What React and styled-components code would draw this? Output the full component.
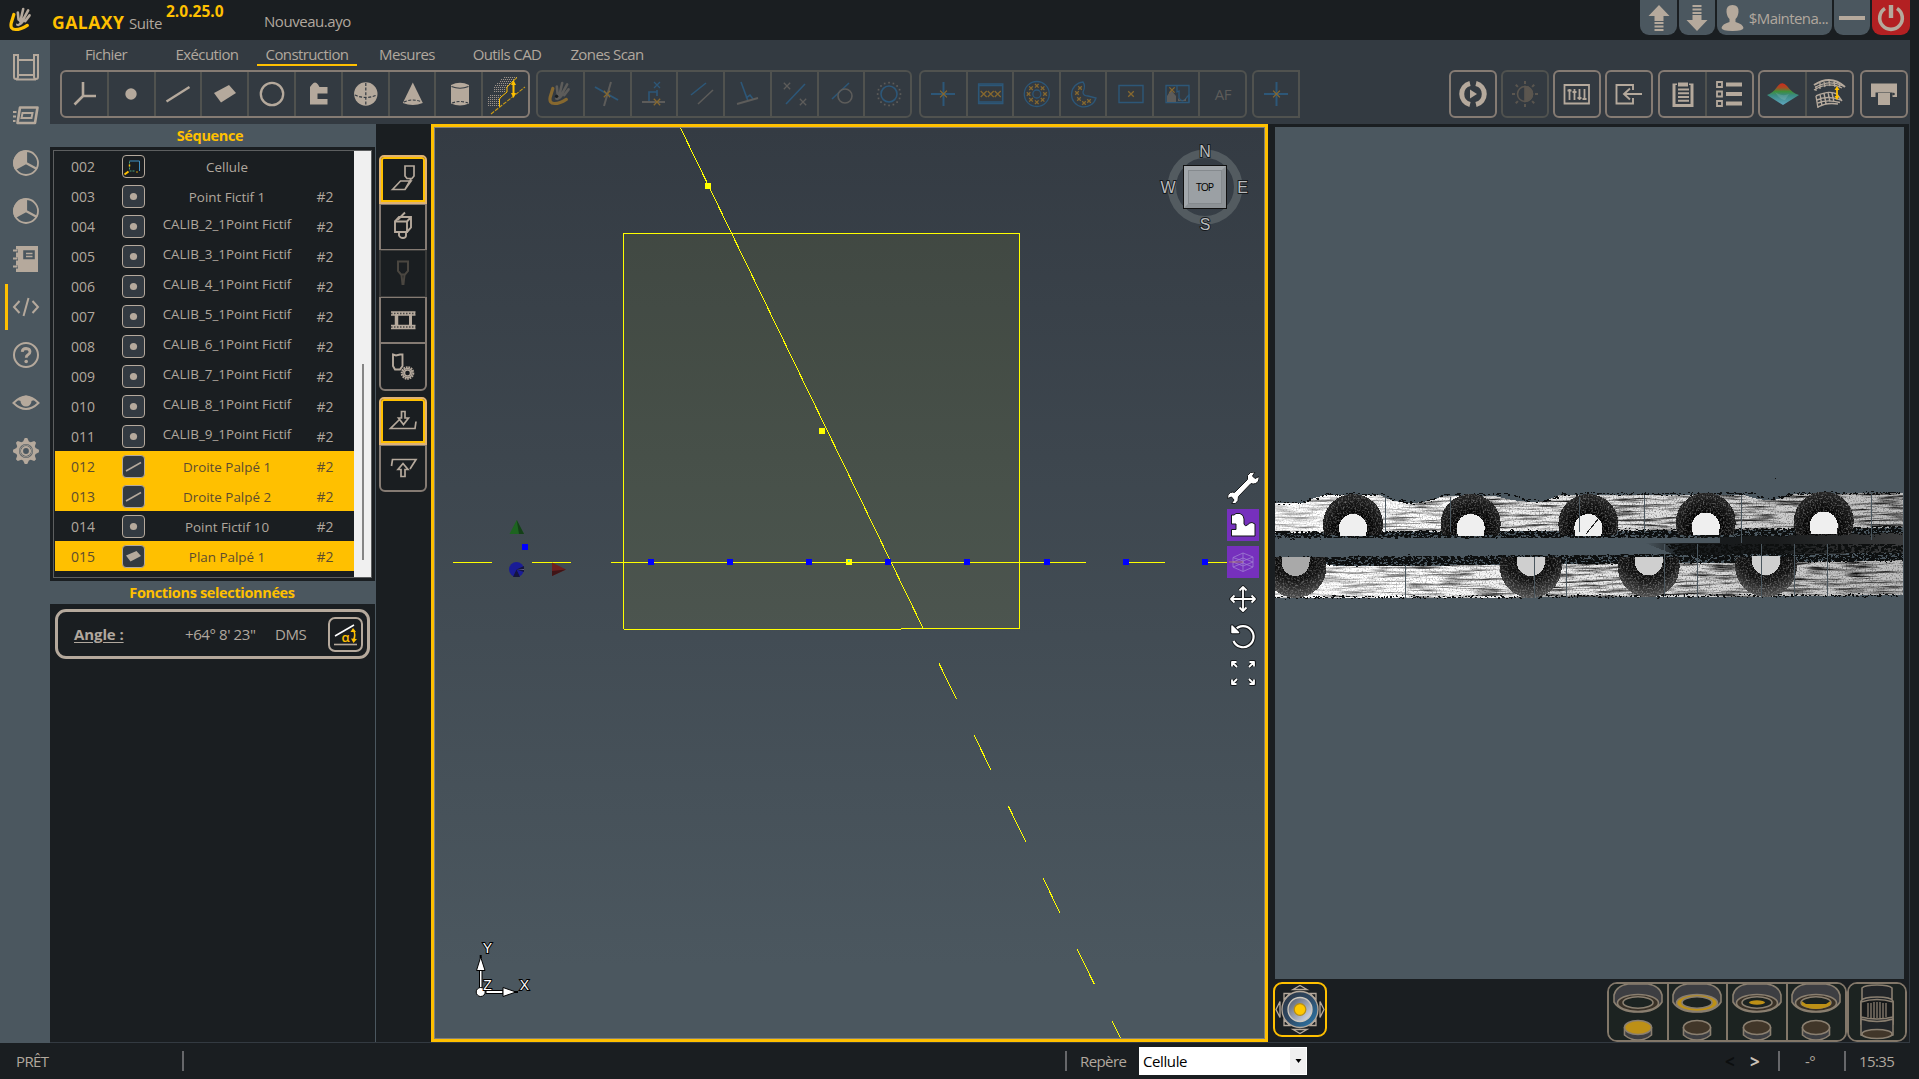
import React from "react";
import styled, { createGlobalStyle, css } from "styled-components";

const C = {
  dark: "#1a1e21",
  bar: "#333a41",
  slate: "#4b575f",
  gold: "#ffc000",
  sand: "#b5a99c",
  text: "#b1a89e",
  edge: "#857b73",
  faint: "#50524f",
  blue: "#2d5778",
  ochre: "#86682f",
  grey: "#5d5c5a",
};

const Global = createGlobalStyle`
  * { box-sizing: border-box; }
  body { margin: 0; background: ${C.dark}; overflow: hidden; }
  svg { display: block; flex: none; }
`;

const App_ = styled.div`
  width: 1919px;
  height: 1079px;
  display: flex;
  flex-direction: column;
  background: ${C.dark};
  color: ${C.text};
  font-family: "Open Sans", "Noto Sans", sans-serif;
  font-size: 15px;
  white-space: nowrap;
`;

/* ---------- title bar ---------- */
const TitleBar = styled.header`
  height: 40px;
  display: flex;
  align-items: flex-start;
  padding: 0 9px;
`;
const Logo = styled.div`
  width: 43px;
  padding-top: 7px;
`;
const Word = styled.span`
  width: ${(p) => p.$w}px;
  margin-top: ${(p) => p.$top}px;
  line-height: 20px;
  font-size: ${(p) => p.$size}px;
  font-weight: ${(p) => (p.$bold ? 700 : 400)};
  color: ${(p) => (p.$bold ? C.gold : C.text)};
  letter-spacing: ${(p) => p.$ls || 0}px;
`;
const Session = styled.div`
  margin-left: auto;
  display: flex;
  gap: 2px;
`;
const Tab = styled.button`
  width: ${(p) => p.$w}px;
  height: 35px;
  padding: 0;
  border: 0;
  border-radius: 0 0 9px 9px;
  background: ${(p) => (p.$danger ? "#b32022" : C.slate)};
  color: ${C.text};
  font: 15px "Open Sans", sans-serif;
  letter-spacing: -0.6px;
  display: flex;
  align-items: center;
  justify-content: center;
  gap: 5px;
`;

/* ---------- frame ---------- */
const Body = styled.div`
  height: 1003px;
  display: flex;
`;
const Rail = styled.nav`
  width: 50px;
  background: ${C.slate};
  padding: 3px 0 0 2px;
  display: flex;
  flex-direction: column;
`;
const RailItem = styled.div`
  height: 48px;
  display: flex;
  align-items: center;
  justify-content: center;
  position: relative;
  ${(p) =>
    p.$active &&
    css`
      &::before {
        content: "";
        position: absolute;
        left: 3px;
        top: 1px;
        width: 3px;
        height: 46px;
        background: ${C.gold};
      }
    `}
`;
const Main = styled.div`
  width: 1860px;
  display: flex;
  flex-direction: column;
  border-bottom: 1px solid ${C.bar};
`;
const Ribbon = styled.div`
  height: 84px;
  background: ${C.bar};
  display: flex;
  flex-direction: column;
`;
const Menu = styled.div`
  height: 30px;
  display: flex;
  padding-left: 6px;
`;
const MenuItem = styled.div`
  width: 100px;
  height: 26px;
  margin-right: ${(p) => (p.$gap ? p.$gap - 1 : 0)}px;
  line-height: 28px;
  text-align: center;
  font-size: 15px;
  letter-spacing: -0.6px;
  border-bottom: 2px solid ${(p) => (p.$active ? C.gold : "transparent")};
`;
const Tools = styled.div`
  display: flex;
  padding: 0 1px 0 10px;
`;
const Group = styled.div`
  width: ${(p) => p.$w}px;
  height: 48px;
  flex: none;
  margin-left: ${(p) => (p.$gap ? p.$gap : 0)}px;
  display: flex;
  border: 2px solid ${(p) => (p.$off ? C.faint : C.edge)};
  border-radius: ${(p) => (p.$open ? "6px 0 0 6px" : "6px")};
`;
const Tool = styled.button`
  flex: 1 1 0;
  min-width: 0;
  padding: 0;
  border: 0;
  background: none;
  display: flex;
  align-items: center;
  justify-content: center;
  & + & {
    border-left: 2px solid ${(p) => (p.$off ? C.faint : C.edge)};
  }
`;
const AF = styled.span`
  font: 15px "Open Sans", sans-serif;
  color: ${C.grey};
  letter-spacing: -0.5px;
`;
const Work = styled.div`
  height: 918px;
  display: flex;
`;

/* ---------- sequence panel ---------- */
const Side = styled.aside`
  width: 326px;
  border-right: 1px solid ${C.slate};
  display: flex;
  flex-direction: column;
`;
const Heading = styled.h2`
  margin: 0;
  height: 23px;
  line-height: 23px;
  padding-right: ${(p) => p.$shift || 4}px;
  text-align: center;
  background: ${C.slate};
  color: ${C.gold};
  font-size: 14.5px;
  font-weight: 700;
  letter-spacing: -0.35px;
`;
const ListBox = styled.div`
  margin: 3px 3px 3px;
  width: 319px;
  height: 428px;
  border: 1px solid #5d5f60;
  display: flex;
`;
const Rows = styled.div`
  width: 300px;
  padding-left: 1px;
`;
const Row = styled.div`
  height: 30px;
  display: grid;
  grid-template-columns: 56px 45px 142px 54px;
  align-items: center;
  justify-items: center;
  font-size: 14px;
  background: ${(p) => (p.$on ? C.gold : "transparent")};
  color: ${(p) => (p.$on ? "#5d4c2e" : C.text)};
`;
const Name = styled.span`
  font-size: 13.4px;
  line-height: 18px;
  padding-top: ${(p) => (p.$raised ? 0 : 1)}px;
  padding-bottom: ${(p) => (p.$raised ? 4 : 0)}px;
`;
const Badge = styled.span`
  width: 23px;
  height: 23px;
  display: flex;
  align-items: center;
  justify-content: center;
  border: 1px solid ${C.sand};
  border-radius: 4px;
  background: ${(p) => (p.$plain ? C.dark : C.bar)};
  overflow: hidden;
`;
const Scroll = styled.div`
  flex: 1;
  background: #f0f0f0;
  padding: 213px 0 0 8px;
`;
const Thumb = styled.div`
  width: 2px;
  height: 196px;
  background: #858585;
`;
const Result = styled.div`
  margin: 5px 4px 0 5px;
  width: 315px;
  height: 50px;
  border: 3px solid ${C.sand};
  border-radius: 11px;
  display: flex;
  align-items: center;
  padding: 0 4px 0 16px;
`;
const ResultText = styled.span`
  width: ${(p) => p.$w}px;
  font-size: 15px;
  letter-spacing: ${(p) => (p.$bold ? -0.1 : -0.4)}px;
  font-weight: ${(p) => (p.$bold ? 700 : 400)};
  text-decoration: ${(p) => (p.$bold ? "underline" : "none")};
  text-underline-offset: 2px;
`;
const AngleButton = styled.div`
  width: 35px;
  height: 35px;
  border: 2px solid ${C.sand};
  border-radius: 7px;
  display: flex;
  align-items: center;
  justify-content: center;
`;

/* ---------- probe strip ---------- */
const Strip = styled.div`
  width: 55px;
  padding: 31px 4px 0 3px;
  display: flex;
  flex-direction: column;
  gap: 6px;
`;
const StripGroup = styled.div`
  width: 48px;
  height: ${(p) => p.$h}px;
  display: flex;
  flex-direction: column;
`;
const Probe = styled.div`
  flex: 1;
  display: flex;
  align-items: center;
  justify-content: center;
  border: 2px solid ${(p) => (p.$off ? "#3b3b3a" : C.edge)};
  border-bottom-width: ${(p) => (p.$last ? 2 : 1)}px;
  border-top-width: 1px;
  border-radius: ${(p) => (p.$last ? "0 0 6px 6px" : "0")};
  ${(p) =>
    p.$on &&
    css`
      border: 2px solid #dfb274;
      border-radius: 5px 5px 0 0;
      box-shadow: inset 0 0 0 2px ${C.gold};
    `}
`;

/* ---------- 3D view ---------- */
const View = styled.section`
  width: 837px;
  height: 918px;
  position: relative;
  border: 3px solid ${C.gold};
`;
const Scene = styled.div`
  width: 831px;
  height: 912px;
  border: 1px solid #83807a;
  background: linear-gradient(#343b43, #4b575f 92%);
`;
const Floating = styled.div`
  position: absolute;
  left: 793px;
  top: 345px;
  display: flex;
  flex-direction: column;
  gap: 5px;
`;
const Float = styled.div`
  width: 32px;
  height: 32px;
  background: ${(p) => (p.$purple ? "#7630bd" : "transparent")};
  display: flex;
  align-items: center;
  justify-content: center;
`;

/* ---------- camera side ---------- */
const Camera = styled.section`
  width: 642px;
  padding: 3px 0 0 7px;
  border-right: 1px solid ${C.bar};
  display: flex;
  flex-direction: column;
`;
const Scan = styled.div`
  width: 629px;
  height: 852px;
  padding-top: 333px;
  background: ${C.slate};
`;
const Lights = styled.div`
  display: flex;
  margin: 3px 0 0 -2px;
`;
const Stick = styled.div`
  width: 54px;
  height: 55px;
  border: 2px solid ${C.gold};
  border-radius: 9px;
  display: flex;
  align-items: center;
  justify-content: center;
`;
const LightGroup = styled.div`
  width: ${(p) => p.$w}px;
  height: 60px;
  flex: none;
  margin-left: ${(p) => p.$gap}px;
  display: flex;
  border: 2px solid #827769;
  border-radius: 10px;
  overflow: hidden;
`;
const Light = styled.div`
  flex: 1 1 0;
  min-width: 0;
  background: #1c2321;
  display: flex;
  justify-content: center;
  & + & {
    border-left: 2px solid #827769;
  }
`;

/* ---------- status ---------- */
const Status = styled.footer`
  height: 36px;
  display: flex;
  align-items: center;
  font-size: 15px;
  letter-spacing: -0.6px;
`;
const Cell = styled.span`
  width: ${(p) => p.$w}px;
  padding-left: ${(p) => p.$pad || 0}px;
  color: ${(p) => p.$color || C.text};
  font-size: ${(p) => (p.$bold ? 17 : 15)}px;
  font-weight: ${(p) => (p.$bold ? 700 : 400)};
`;
const Sep = styled.span`
  width: 2px;
  height: 20px;
  background: #66676a;
`;
const Select = styled.div`
  width: 168px;
  height: 28px;
  background: #fff;
  border: 1px solid #fff;
  color: #000;
  letter-spacing: -0.4px;
  display: flex;
  align-items: center;
  justify-content: space-between;
  padding-left: 3px;
`;
const Drop = styled.span`
  width: 16px;
  height: 26px;
  background: #f0f0f0;
  display: flex;
  align-items: center;
  justify-content: center;
`;

/* Icon canvas whose origin is its centre */
const Ic = ({ s = 44, h, c = C.sand, sw = 1.6, children }) => (
  <svg
    width={s}
    height={h || s}
    viewBox={`${-s / 2} ${-(h || s) / 2} ${s} ${h || s}`}
    fill="none"
    stroke={c}
    strokeWidth={sw}
  >
    {children}
  </svg>
);

const Hand = ({ a = C.sand, b = C.gold, s = 24 }) => (
  <svg width={s} height={s * 1.08} viewBox="0 0 24 26" fill="none" strokeLinecap="round">
    <path d="M4.8 7.5 2.2 16Q0.8 22.6 6.5 22.6 12 22.6 18.3 18.4" stroke={b} strokeWidth="3.2" />
    <path d="M9.5 12.5 8.8 5.5M12 11.5 14.2 2M14.4 12.2 19.2 3.4M16.2 14.2 20.6 8.4" stroke={a} strokeWidth="2.6" />
    <path d="M7.5 15.5 10 12.2Q13 10 16.4 13.4L13 17.4Q9.5 20.4 7 18.4Z" fill={a} />
    <circle cx="8.6" cy="15.4" r="1.7" fill={C.dark} />
  </svg>
);

const x = (cx, cy, r = 2.4, c = C.ochre, k = "") => (
  <path key={k || `${cx},${cy}`} d={`M${cx - r} ${cy - r}l${2 * r} ${2 * r}m0 ${-2 * r}l${-2 * r} ${2 * r}`} stroke={c} strokeWidth="1.3" />
);
const ring = (n, r, fn, from = 0, to = 360) =>
  Array.from({ length: n }, (_, i) => {
    const t = ((from + ((to - from) * i) / n) * Math.PI) / 180;
    return fn(+(Math.cos(t) * r).toFixed(2), +(Math.sin(t) * r).toFixed(2), i);
  });

const hatch = (rows) =>
  rows.map(([y, a, b]) => <path key={y} d={`M${a} ${y}H${b}`} stroke={C.sand} strokeWidth="1.2" strokeDasharray="1.1 .9" opacity=".8" />);

const createTools = [
  <Ic key="a" sw={2.6}><path d="M-1-12V2H12M-1 2-9.5 10.5" /></Ic>,
  <Ic key="b"><circle r="5.7" fill={C.sand} stroke="none" /></Ic>,
  <Ic key="c" sw={2.4}><path d="M-11.5 7.5 11.5-7" /></Ic>,
  <Ic key="d"><path d="M-11-1 4-9 11-1-4 8.5Z" fill={C.sand} stroke="none" /></Ic>,
  <Ic key="e" sw={2.3}><circle r="11.2" /></Ic>,
  <Ic key="f"><path d="M-8-7-6-9.5Q-3-13.500 0-9.5L1.5-7H9.5V-.5H-.5V5H9.5V10.5H-8Z" fill={C.sand} stroke="none" /></Ic>,
  <Ic key="g"><g transform="translate(.8 0)"><circle r="11.7" fill={C.sand} stroke="none" /><path d="M0-11V11M-11 1Q0 6 11 1" stroke={C.bar} strokeDasharray="3 1.6" strokeWidth="1.2" /></g></Ic>,
  <Ic key="h"><g transform="translate(.8 0)"><path d="M0-11.5-10 9Q0 13 10 9Z" fill={C.sand} stroke="none" /><path d="M-9 8Q0 4 9 8" stroke={C.bar} strokeDasharray="3 1.6" strokeWidth="1.1" /></g></Ic>,
  <Ic key="i"><g transform="translate(1 0)"><path d="M-9-9Q0-13.5 9-9V9.5Q0 13.5-9 9.5Z" fill={C.sand} stroke="none" /><path d="M-8.500-7.500Q0-4 8.500-7.500" stroke={C.bar} strokeWidth="1.2" /><path d="M-8 9Q0 6 8 9" stroke={C.bar} strokeDasharray="3 1.6" strokeWidth="1.1" /></g></Ic>,
  <Ic key="j">
    <g transform="translate(1 0)">
      {hatch([[-16.500, -3, 10], [-14.500, -6, 8], [-12.500, -7, 6], [-10.500, -10, 4], [-8.500, -12, 2], [-6.500, -13, 0], [-4.500, -13, -1], [-2.500, -13, -1], [1.500, -17, -6], [3.500, -19, -7], [5.500, -19, -8], [7.500, -19, -8], [9.500, -19, -8], [11.500, -19, -8]])}
      <path d="M10-16.500 0-7V-2L-6 3-7.500 5V13" stroke={C.gold} strokeWidth="1" />
      <path d="M-16 20 18-7" stroke="#c99a14" strokeDasharray="4 1.200" strokeWidth="1.100" />
      <path d="M6.500-10V0" stroke={C.gold} strokeWidth="2" />
      <path d="M4-9 6.500-14 9-9ZM4-1 6.500 4 9-1Z" fill={C.gold} stroke="none" />
    </g>
  </Ic>,
];

const buildTools = [
  <Hand key="a" a={C.grey} b={C.ochre} s={24} />,
  <Ic key="b" c={C.blue} sw={2}><path d="M-12-7 11 6" /><path d="M4-12-3 12" stroke={C.grey} />{x(0, 0, 3.2)}</Ic>,
  <Ic key="c" c={C.blue}>{x(3, -9, 3, C.blue)}<path d="M3-4V2M-5 7V-2H3" /><path d="M-12 8H11" stroke={C.grey} strokeWidth="2" />{x(3, 8, 3.2)}</Ic>,
  <Ic key="d" c={C.blue}><path d="M-10 1 5-11" /><path d="M-3 10 12-4" stroke={C.grey} /></Ic>,
  <Ic key="e" c={C.blue}><path d="M-6-12 1 7M-1 4 3 1 6 5" /><path d="M-10 10 11 4" stroke={C.grey} strokeWidth="2" /></Ic>,
  <Ic key="f" c={C.blue}><path d="M-8 10 11-10" />{x(-7, -8, 3.2, C.grey)}{x(9, 8, 3.2, C.grey)}</Ic>,
  <Ic key="g" c={C.blue}><path d="M-9 5 8-11" /><circle cx="4" cy="2" r="7" stroke={C.grey} /></Ic>,
  <Ic key="h" c={C.blue}><g transform="translate(1 0)"><circle r="8" />{ring(16, 11.4, (a, b, i) => <rect key={i} x={a - 0.8} y={b - 0.8} width="1.7" height="1.7" fill={C.grey} stroke="none" />)}</g></Ic>,
];

const detectTools = [
  <Ic key="a" c={C.blue} sw={2}><path d="M.500-12V12M-12 0H12" />{x(0.5, 0, 3.4)}</Ic>,
  <Ic key="b" c={C.blue}><g transform="translate(.7 0)"><path d="M-12-10H12V9.500H-12Z" /><path d="M-12-8.500H12M-12 8H12" />{x(-7, 0, 3)}{x(0, 0, 3)}{x(7, 0, 3)}</g></Ic>,
  <Ic key="c" c={C.blue} sw={1.3}><g transform="translate(.8 0)"><circle r="12.500" /><circle r="4" />{ring(8, 8.2, (a, b, i) => x(a, b, 1.8, C.ochre, "r" + i))}</g></Ic>,
  <Ic key="d" c={C.blue} sw={1.3}><g transform="translate(1 0)"><path d="M-1-12A12.500 12.500 0 1 0 12 4L4 2Q-1 2-1-2 2-8-1-12Z" />{[[-4, -6], [-7, -1], [-5, 5], [0, 9], [5, 7]].map(([a, b]) => x(a, b, 1.8))}</g></Ic>,
  <Ic key="e" c={C.blue} sw={1.4}><g transform="translate(1 0)"><path d="M-12-8.500H12V8.500H-12Z" />{x(0, 0, 2.8)}</g></Ic>,
  <Ic key="f" c={C.blue} sw={1.3}><g transform="translate(1 0)"><path d="M-11-8.500H12V8.500H-11Z" /><path d="M-10 8V2L-6-4-1 2V8Z" fill={C.grey} stroke="none" /><path d="M0-8V-2L2-3V4Q6 10 10 3L12 1V8.500" /><path d="M1 7V4Q5 10 9 4V7Z" fill={C.grey} stroke="none" />{x(-5, -4, 2.6)}</g></Ic>,
  <AF key="g">AF</AF>,
];

const Print = (
  <Ic><path d="M-13-10.500H13V3H8.500V-1.500H-8.500V3H-13Z" fill={C.sand} stroke="none" /><path d="M-6-1H6V11H-6Z" fill={C.sand} stroke="none" /><circle cx="9.500" cy="0" r="1.300" fill={C.bar} stroke="none" /></Ic>
);
const rightGroups = [
  { w: 48, gap: 149, items: [<Ic key="a" sw={5}><path d="M-3-10.500A10.800 10.800 0 0 0-3 10.500M3-10.500A10.800 10.800 0 0 1 3 10.500" /><path d="M-3-4.500 4 0-3 4.500Z" fill={C.sand} stroke="none" /></Ic>] },
  { w: 48, gap: 4, off: true, items: [<Ic key="a" c="#5b564f"><circle r="7.500" /><path d="M0-7.500A7.500 7.500 0 0 1 0 7.500Z" fill="#5b564f" />{ring(8, 1, (a, b, i) => <path key={i} d={`M${a * 10} ${b * 10}L${a * 13} ${b * 13}`} strokeWidth="2" />)}</Ic>] },
  { w: 48, gap: 4, items: [<Ic key="a" sw={1.8}><path d="M-12.500-9H12V9.500H-12.500Z" /><path d="M-7.500-5V6M-2.500-5V6M2.500-5V6M7.500-5V6" strokeWidth="1.8" /><path d="M-9.500-3.500H-5.500M-4.500-2H-.5M.5 4H4.500M5.500 5H9.500" strokeWidth="2" /></Ic>] },
  { w: 48, gap: 4, items: [<Ic key="a" sw={1.9}><path d="M4-4V-9H-12.500V9.500H4V4M13 0H-5M1-5.500-5 0 1 5.500" /></Ic>] },
  { w: 96, gap: 5, items: [
    <Ic key="a"><path d="M-10.500-10.500H10.500V13H-10.500Z" fill={C.sand} stroke="none" /><path d="M-7.500-9H7.500V10H-7.500Z" fill={C.bar} stroke="none" /><path d="M-5.500-12H5.500V-7H-5.500Z" fill={C.sand} stroke={C.bar} strokeWidth="1" /><path d="M-5-4.500H6M-5-.8H6M-5 3H6M-5 6.700H6" strokeWidth="2" /></Ic>,
    <Ic key="b" sw={1.8}><path d="M-13-12H-8V-7H-13ZM-13-2.500H-8V2.500H-13ZM-13 7H-8V12H-13Z" /><path d="M-4-9.500H12M-4 0H12M-4 9.500H12" strokeWidth="4" /></Ic>,
  ] },
  { w: 96, gap: 4, items: [
    <Ic key="a"><defs><linearGradient id="peak" x2="0" y2="1"><stop offset="0" stopColor="#d02a1c" /><stop offset=".2" stopColor="#a84a22" /><stop offset=".38" stopColor="#3f8f3c" /><stop offset=".55" stopColor="#3a8a80" /><stop offset="1" stopColor="#5fa6c0" /></linearGradient></defs><path d="M-16 1Q-10-1-6-7-1-14 4-8 9-1 16 1L0 11Z" fill="url(#peak)" stroke="none" /><path d="M-8-2Q-1 3 6 0L2 6Q-3 6-8-2Z" fill="#fff" opacity=".12" stroke="none" /></Ic>,
    <Ic key="b"><g transform="translate(-1 0)"><path d="M-15-9Q2-20 16-7" strokeWidth="2" /><path d="M-15-4Q0-13 13-6M-13-8V-3M-9-11-9-5M-5-12-4-7M0-13 1-8M5-12 6-7M10-10 11-6M-14-6.500Q0-15 14-8" strokeWidth="1.3" /><path d="M-13 2Q0-4 8 0L13 7M-12 6Q-2 1 12 6M-11 9Q-2 5 11 8.500M-11 13Q-2 8 9 10M-13 2-11 14M-9 0-7 12M-5-1-3 10M-1-2 1 8M3-1 5 8" strokeWidth="1.4" /><path d="M8-6V4" stroke={C.gold} strokeWidth="1.800" /><path d="M5.500-4 8-8 10.500-4ZM5.500 2 8 6 10.500 2Z" fill={C.gold} stroke="none" /></g></Ic>,
  ] },
  { w: 48, gap: 6, items: [React.cloneElement(Print, { key: "p" })] },
];

const gear = (R, r, n) =>
  "M" + Array.from({ length: n * 4 }, (_, i) => {
    const t = ((i - 0.5) / (n * 4)) * Math.PI * 2;
    const q = i % 4 < 2 ? R : r;
    return `${(Math.cos(t) * q).toFixed(2)} ${(Math.sin(t) * q).toFixed(2)}`;
  }).join("L") + "Z";

const Pie = (
  <Ic s={32} sw={1.8}><circle r="12" /><path d="M0-.5V-12.500A12.500 12.500 0 0 0-11 6.500Z" fill={C.sand} stroke="none" /><path d="M0-12V0L11 6M0 0-11 6" strokeWidth="2.200" /></Ic>
);
const railIcons = [
  <Ic s={32} sw={2}><path d="M-8-7H8M-8 8H8M-12-12H-8V10Q-8 12-10 12-12 12-12 10ZM12-12H8V10Q8 12 10 12 12 12 12 10Z" /><path d="M-10 12.500H10" /></Ic>,
  <Ic s={32} sw={2.6}><path d="M-6-7.500H11.500L9 8H-8.500Z" strokeLinejoin="round" /><path d="M-3.500-2H6.500L5.500 3H-4.500Z" strokeWidth="2" /><path d="M-13-3H-9.500M-13 1.500H-10M-13 6H-10.500" strokeWidth="1.8" /></Ic>,
  Pie,
  Pie,
  <Ic s={32}><path d="M-10-13H12V13H-10Z" fill={C.sand} stroke="none" /><path d="M-2-8H8V-.5H-2Z" fill={C.slate} stroke={C.slate} /><path d="M0-5.500H6.500M0-2.500H6.500" strokeWidth="1.500" /><path d="M-13.500-8H-8M-13.500 0H-8M-13.500 8H-8" strokeWidth="3" stroke={C.slate} /><path d="M-13-8.500H-8.500M-13-.5H-8.500M-13 7.500H-8.500" strokeWidth="1.800" /></Ic>,
  <Ic s={32} sw={2}><path d="M-6.500-6-12 0-6.500 6M6.500-6 12 0 6.500 6M2.500-9-2.500 9" /></Ic>,
  <Ic s={32} sw={2}><circle r="12" /><path d="M-3.800-3.200Q-3.500-6.500 0-6.500 4-6.300 4-3.200 4-1.300 2-.2 .2.8 .2 2.800" strokeWidth="2.800" /><circle cx=".2" cy="6.500" r="1.800" fill={C.sand} stroke="none" /></Ic>,
  <Ic s={32} sw={2}><path d="M-12.500 0Q0-13 12.500 0 0 12-12.500 0Z" /><circle cy="-2" r="5.500" fill={C.sand} stroke="none" /><path d="M-9-3Q0-10 9-3L5-2H-5Z" fill={C.sand} stroke="none" /></Ic>,
  <Ic s={32}><path d={gear(13, 10, 8)} fill={C.sand} stroke="none" /><circle r="7" fill={C.slate} stroke="none" /><circle r="4" strokeWidth="2.200" /><circle r="6" strokeWidth=".8" /></Ic>,
];

const rows = [
  ["002", "cell", "Cellule", ""],
  ["003", "dot", "Point Fictif 1", "#2"],
  ...[2, 3, 4, 5, 6, 7, 8, 9].map((n) => [String(n + 2).padStart(3, "0"), "dot", `CALIB_${n}_1Point Fictif`, "#2"]),
  ["012", "line", "Droite Palpé 1", "#2"],
  ["013", "line", "Droite Palpé 2", "#2"],
  ["014", "dot", "Point Fictif 10", "#2"],
  ["015", "plane", "Plan Palpé 1", "#2"],
];
const badgeIcons = {
  cell: <Ic s={21} sw={1}><path d="M-4-5.500H6V4.500" stroke="#3e8fc4" /><path d="M-4-5V3M-4 4.500H1" stroke="#4aa07c" strokeDasharray="2 1" /><path d="M-9 8-5 5" stroke={C.gold} strokeWidth="2" /><path d="M-4-2V0M3 5.500H4" stroke={C.gold} strokeWidth="1.500" /></Ic>,
  dot: <Ic s={21}><circle r="3.600" fill={C.sand} stroke="none" /></Ic>,
  line: <Ic s={21} sw={1.5}><path d="M-7.500 4.500 7.500-4" /></Ic>,
  plane: <Ic s={21}><path d="M-7.500-1 3-5.500 7.500-.5-3 5Z" fill={C.sand} stroke="none" /></Ic>,
};

const probesA = [
  { on: true, i: <Ic sw={1.7}><g transform="translate(0 1.500)"><path d="M2-14.500H11V-4.500L9-2H4L2-4.500ZM-10.500 9-2.500 .5H8L2 9ZM8-1.500 2 9" /></g></Ic> },
  { i: <Ic sw={1.9}><g transform="translate(0 -1.500)"><path d="M-8-4H4V6.500H-8ZM-8-4-4-8.500H8V2L4 6.500M4-4 8-8.500M-5-6 2-13M-4 7.500V10Q-3 12.500 0 12.500 3 12.500 3 10V7.500" /></g></Ic> },
  { off: true, i: <Ic c="#4a4640" sw={2}><path d="M-5-11.500H5V-2L2 1.500H-2L-5-2ZM-1.500 2-.5 11H.5L1.500 2" /></Ic> },
  { i: <Ic><path d="M-12-6.500H12.500M-12 7H12.500" strokeWidth="4.500" /><path d="M-12-6.500H12.500M-12 7H12.500" strokeWidth="1.500" stroke={C.dark} strokeDasharray="1.500 1.500" opacity=".7" /><path d="M-6.500-6V6" strokeWidth="3.500" /><path d="M7.500-6V6" strokeWidth="3" /></Ic> },
  { last: true, i: <Ic sw={1.9}><path d="M-10-12.500-7-11.500-3-12.500H-.500V-1L-3 2.500H-8L-10-1Z" /><g transform="translate(4.500 6)"><circle r="5.800" strokeWidth="2" strokeDasharray="1.700 .8" /><circle r="3" strokeWidth="1.400" /><circle r="4.500" strokeWidth="1.400" /></g></Ic> },
];
const probesB = [
  { on: true, i: <Ic sw={1.7}><path d="M-1.500-9.500H2V-3H5.500L.5 3.500-4.500-3H-1.500ZM-4-1-12.500 7.500H12L13 .5" /></Ic> },
  { last: true, i: <Ic sw={1.7}><path d="M-11.500-2-10.500-8.500H13L7 1M-2 8.500H2V1.500H5L0-4.500-5 1.500H-2Z" /></Ic> },
];

/* Drawing of the measured part: plane, probed lines and points */
const squares = [651, 730, 809, 888, 967, 1047, 1126, 1205];
const dashes = [[939, 663.500, 956.500, 699], [974, 735, 991, 770], [1008.500, 806.500, 1026, 842], [1043, 878, 1060, 913], [1077, 949, 1094.500, 984.500], [1112, 1021, 1120.500, 1038]];
const SceneDrawing = () => (
  <svg width="829" height="910" viewBox="435 128 829 910">
    <path d="M623.5 233.500H1019.500V628.500H901V629.500H623.500Z" fill="#ffff00" fillOpacity=".055" stroke="none" />
    <g stroke="#ffff00" fill="none" shapeRendering="crispEdges">
      <path d="M623.500 629V233.500H1019.500V628.500H901M901 629.500H623.500" />
      <path d="M453 562.500H492M532 562.500H571M611 562.500H1086M1125 562.500H1165M1205 562.500H1237" />
      <path d={`M680.5 128 923 628${dashes.map(([a, b, c, d]) => `M${a} ${b}L${c} ${d}`).join("")}`} />
    </g>
    <g fill="#0000ff">
      {squares.map((s) => <rect key={s} x={s - 3} y="559" width="6" height="6" />)}
      <rect x="522" y="544" width="6" height="6" />
    </g>
    <g fill="#ffff00">
      <rect x="846" y="559" width="6" height="6" /><rect x="705" y="183" width="6" height="6" /><rect x="819" y="428" width="6" height="6" />
      <rect x="848" y="560" width="1.500" height="2" fill="#22e0e0" />
    </g>
    <path d="M516.700 520 509.500 534H524Z" fill="#1d6420" /><path d="M516.700 520 519 534H524Z" fill="#143f18" />
    <circle cx="516.500" cy="569.500" r="7.500" fill="#1a1c96" /><path d="M516.500 569.500 513 577H520ZM516.500 569.500 524 566V572Z" fill="#15153f" /><path d="M516.500 569.500 524 569V570Z" fill="#66668c" />
    <path d="M552 562.500 566 569.500 552 576Z" fill="#6d2020" /><path d="M552 571 566 569.500 552 576Z" fill="#3f1517" />
    <g stroke="#000" fill="#fff">
      <path d="M479.500 988V970H482V988ZM486 990.500H503V993.500H486Z" /><path d="M480.700 957 476.500 970.500H485Z" /><path d="M503 987.500V996.500L516 992Z" /><circle cx="480.700" cy="992" r="4.500" />
    </g>
    <path d="M480.700 955v3M515 992h3" stroke="#000" strokeWidth="2" />
    <g fontFamily="Liberation Sans" fontSize="14" fill="#fff" stroke="#000" strokeWidth="2" paintOrder="stroke" textAnchor="middle">
      <text x="487.500" y="953">Y</text><text x="524.500" y="990">X</text><text x="487.500" y="989.500">Z</text>
    </g>
    <circle cx="1205" cy="187" r="33.200" fill="none" stroke="#535b60" strokeWidth="8.500" />
    <rect x="1183.500" y="165.500" width="43" height="43" fill="#9a9fa3" stroke="#111" />
    <path d="M1184 166H1226L1221 171H1189V203L1184 208Z" fill="#a3a8ac" /><path d="M1226 208H1184L1189 203H1221V171L1226 166Z" fill="#8d9296" />
    <rect x="1188.500" y="170.500" width="33" height="33" fill="#9ba0a4" stroke="#858a8e" />
    <text x="1205" y="191" fontFamily="Open Sans" fontSize="10.500" textAnchor="middle" textLength="18" fill="#000">TOP</text>
    <g fontFamily="Liberation Sans" fontSize="16" fill="#b9bcbf" stroke="#15181b" strokeWidth="1.800" paintOrder="stroke" textAnchor="middle">
      <text x="1205" y="156.500">N</text><text x="1242.500" y="193">E</text><text x="1168" y="193">W</text><text x="1205" y="230">S</text>
    </g>
  </svg>
);

const Outline = ({ d, w = 2.2, fill = "none" }) => (
  <g strokeLinejoin="round"><path d={d} stroke="#15181b" strokeWidth={w + 2} fill={fill} /><path d={d} stroke="#fff" strokeWidth={w} fill={fill} /></g>
);
const wrench = "M-8.500 4.500 4.500-8.500Q3-13 7.500-15.500L12-16 9.500-12 12-9.500 16-11.500Q16.500-6 12.500-4.500 10-3.500 8-4.500L-4.500 8.500Q-4 13-7.500 15.500L-11.500 15.500-9 12-11.500 9-15.500 10.500Q-16 6-12.500 4.500-10 3.700-8.500 4.500Z";
const floats = [
  { i: <Ic s={32}><path d={wrench} fill="#fff" stroke="#15181b" strokeWidth="1" /></Ic> },
  { p: true, i: <Ic s={32}><path d="M-11.500-10H-9L-7-11.500H-3Q1-10 1-6V-1Q2 2 4.500 0 6-2.500 9-2.500L12-1V11H-11.500V4.500H-7V-1H-11.500Z" fill="#fff" stroke="#15181b" strokeWidth="1" /></Ic> },
  { p: true, i: <Ic s={32} c="#a07fd2" sw={0.8}><path d="M-10-4.500 0-9 10-5V5L0 9.500-10 5ZM-10-4.500 0-1 10-5M0-1V9.500M0-9V1L-10 5M0 1 10 5M-10 0 0-4 10 0 0 4Z" /><path d="M-14 0H0" stroke="#b08a60" strokeWidth=".8" /></Ic> },
  { i: <Ic s={32}><Outline w={1.8} d="M0-11.500V11.500M-11.500 0H11.500M-3.500-8.500 0-12 3.500-8.500M-3.500 8.500 0 12 3.500 8.500M-8.500-3.500-12 0-8.500 3.500M8.500-3.500 12 0 8.500 3.500" /></Ic> },
  { i: <Ic s={32}><Outline d="M-8-6A10.500 10.500 0 1 1-9.500 5" /><Outline w={1.5} fill="#fff" d="M-11-10V-3.500H-4.500Z" /></Ic> },
  { i: <Ic s={32}><Outline w={1.8} d="M-6-6-10-10M-11-6.500V-11H-6.500M6-6 10-10M11-6.500V-11H6.500M-6 6-10 10M-11 6.500V11H-6.500M6 6 10 10M11 6.500V11H6.500" /></Ic> },
];

/* Stitched camera picture of the machined bar */
const upHoles = [[78, 64], [195.700, 64], [313.300, 64], [430.800, 62.500], [548.800, 61.500]];
const lowHoles = [[20.500, 107], [255.800, 107], [373.700, 106.500], [491, 106]];
const upPath = "M0 43Q15 44 28 43 42 36 52 35H105Q118 43 138 43 155 42 168 36L220 36Q240 42 262 42 276 40 284 35L470 35Q480 40 497 40 508 39 514 34L628 33V67L560 70 330 71 140 72 0 73Z";
const lowPath = "M0 101 50 104 60 106 120 106 228 105 345 103 450 103 628 100V135L500 136.500 250 137.500 0 138Z";
let seed = 7;
const rnd = () => ((seed = (seed * 16807) % 2147483647) / 2147483647);
const specks = (n, fy, spread, x0 = 0, x1 = 627) =>
  Array.from({ length: n }, () => {
    const px = Math.floor(x0 + rnd() * (x1 - x0));
    const py = Math.floor(fy(px) + (rnd() + rnd() - 1) * spread);
    return `M${px} ${py}h${1 + Math.floor(rnd() * 2)}v1h-2z`;
  }).join("");
const edgeTop = (px) => {
  for (const [c, half, depth] of [[12, 40, 8], [138, 32, 8], [262, 26, 7], [497, 20, 5]]) {
    const t = Math.abs(px - c) / half;
    if (t < 1) return 35 - px / 320 + depth * (1 - t * t);
  }
  return 35 - px / 320;
};
const edgeDots = specks(480, edgeTop, 2) + specks(460, (p) => 137.5 - p / 300, 2);
const gapDots = specks(1100, (p) => 75 - p / 200, 5) + specks(1400, (p) => 101 - p / 200, 5.5);
const ScanDrawing = () => (
  <svg width="629" height="160" viewBox="0 0 629 160" shapeRendering="crispEdges">
    <defs>
      <filter id="grain" x="0" y="0" width="1" height="1" colorInterpolationFilters="sRGB">
        <feTurbulence type="fractalNoise" baseFrequency=".03 .42" numOctaves="3" seed="4" />
        <feColorMatrix values="2.300 0 0 0 -.3  2.300 0 0 0 -.3  2.300 0 0 0 -.3  0 0 0 0 1" result="s" />
        <feTurbulence type="fractalNoise" baseFrequency=".7" numOctaves="1" seed="9" />
        <feColorMatrix values="1.300 0 0 0 .33  1.300 0 0 0 .33  1.300 0 0 0 .33  0 0 0 0 1" result="f" />
        <feBlend in="s" in2="f" mode="multiply" />
        <feComposite in2="SourceGraphic" operator="in" />
      </filter>
      <filter id="pits" x="0" y="0" width="1" height="1" colorInterpolationFilters="sRGB">
        <feTurbulence type="fractalNoise" baseFrequency=".6" numOctaves="2" seed="3" />
        <feColorMatrix values=".9 0 0 0 -.41  .9 0 0 0 -.41  .9 0 0 0 -.41  0 0 0 0 1" result="n" />
        <feBlend in="n" in2="SourceGraphic" mode="screen" />
        <feComposite in2="SourceGraphic" operator="in" />
      </filter>
      <filter id="speck" x="0" y="0" width="1" height="1" colorInterpolationFilters="sRGB">
        <feTurbulence type="fractalNoise" baseFrequency=".3 .45" numOctaves="2" seed="12" />
        <feColorMatrix values="0 0 0 0 .05  0 0 0 0 .06  0 0 0 0 .06  14 0 0 0 -6.200" />
        <feComposite in2="SourceGraphic" operator="in" />
      </filter>
      <linearGradient id="shade"><stop offset="0" stopColor="#fff" stopOpacity=".45" /><stop offset=".25" stopColor="#fff" stopOpacity=".15" /><stop offset=".5" stopColor="#000" stopOpacity=".08" /><stop offset="1" stopColor="#000" stopOpacity=".26" /></linearGradient>
      <linearGradient id="fade"><stop offset="0" stopColor="#0e1011" stopOpacity="0" /><stop offset=".15" stopColor="#0e1011" stopOpacity=".85" /><stop offset=".5" stopColor="#191b1c" /><stop offset="1" stopColor="#3a3b3c" /></linearGradient>
      <radialGradient id="boreUp" cx=".5" cy=".62" r=".62"><stop offset=".5" stopColor="#060606" /><stop offset=".8" stopColor="#191919" /><stop offset="1" stopColor="#262626" /></radialGradient>
      <radialGradient id="boreLow" cx=".5" cy=".2" r=".8"><stop offset=".3" stopColor="#050505" /><stop offset=".65" stopColor="#141414" /><stop offset="1" stopColor="#505050" /></radialGradient>
      <clipPath id="up"><path d="M0 0H629V75H0Z" /></clipPath>
      <clipPath id="low"><path d="M0 97H629V160H0Z" /></clipPath>
    </defs>
    <path d={upPath} filter="url(#grain)" /><path d={lowPath} filter="url(#grain)" />
    <path d={upPath} fill="url(#shade)" /><path d={lowPath} fill="url(#shade)" />
    <path d="M0 71.500 300 71 628 66V76L400 78 180 78 0 78Z" filter="url(#speck)" />
    <path d="M0 97 300 95 628 91V101L345 104 120 106 60 106 0 101Z" filter="url(#speck)" />
    <path d="M370 83H445V77L628 73V93L400 95Z" fill="url(#fade)" />
    <path d="M390 84H628V93L400 94Z" filter="url(#speck)" />
    <path d={edgeDots + gapDots} fill="#0d0f10" />
    <g clipPath="url(#up)"><g filter="url(#pits)">{upHoles.map(([a, b]) => <circle key={a} cx={a} cy={b} r="30" fill="url(#boreUp)" />)}</g></g>
    <g clipPath="url(#low)"><g filter="url(#pits)">{lowHoles.map(([a, b]) => <circle key={a} cx={a} cy={b} r="31" fill="url(#boreLow)" />)}</g></g>
    {upHoles.map(([a, b]) => <path key={a} d={`M${a - 13} ${b + 12}L${a - 14} ${b + 4}A14 14 0 0 1 ${a + 14} ${b + 4}L${a + 13} ${b + 12}Z`} fill="#efefef" />)}
    {lowHoles.map(([a, b]) => <path key={a} d={`M${a - 14} ${b - 10}V${b - 5}A14 14 0 0 0 ${a + 14} ${b - 5}V${b - 10}Z`} fill={a < 30 ? "#a9a9a9" : "#cfcfcf"} />)}
    <path d="M324 58 311 74" stroke="#222" />
    <path d="M110.500 37V72M175.500 37V72M304.500 37V72M369.500 35V73M466.500 35V83M596.500 33V80M130.500 105V138M259.500 97V138M291.500 100V137M389.500 84V136M422.500 84V137M486.500 84V138M519.500 84V137M552.500 84V136" stroke={C.slate} />
    <rect x="500" y="18" width="1" height="1" fill="#111" />
  </svg>
);

const RingLight = ({ lit }) => {
  const g = "#8a7f70";
  const y = "#bd9016";
  return (
    <svg width="56" height="58" viewBox="-28 0 56 58" fill="none" stroke={g} strokeWidth="1.600">
      <path d="M-24 15V11Q-22 2-10 0H10Q22 2 24 11V18Q18 28 0 28-18 28-24 18Z" fill="#3d3e42" />
      <ellipse cy="19" rx="20.500" ry="8.500" fill={lit === 1 ? y : "#393127"} />
      <ellipse cy="18.500" rx="15" ry="5.800" fill="#1c2321" />
      {lit === 2 && <ellipse cy="18.500" rx="8" ry="2.200" fill={y} stroke="none" />}
      {lit === 3 && <path d="M-14.500 17 -10 20H10L14.500 17V21Q8 25 0 25-8 25-14.500 21Z" fill={y} stroke="none" />}
      <path d="M-13.500 43V51Q-8 56 0 56 8 56 13.500 51V43" fill="#3d3e42" />
      <ellipse cy="43.500" rx="13.500" ry="7" fill={lit === 0 ? y : "#413629"} />
    </svg>
  );
};

export default function App() {
  return (
    <App_>
      <Global />
      <TitleBar>
        <Logo><Hand /></Logo>
        <Word $w={77} $top={12} $size={17.5} $bold $ls={0.5}>GALAXY</Word>
        <Word $w={37} $top={13} $size={15} $ls={-0.4}>Suite</Word>
        <Word $w={98} $top={1} $size={15.5} $bold $ls={0}>2.0.25.0</Word>
        <Word $w={100} $top={11} $size={15} $ls={-0.45}>Nouveau.ayo</Word>
        <Session>
          <Tab $w={37}><Ic s={30}><path d="M0-13 10.500-2H4.500V3H-4.500V-2H-10.500Z" fill={C.sand} stroke="none" /><path d="M-4.500 5H4.500M-4.500 8.500H4.500M-4.500 12H4.500" strokeWidth="2.200" /></Ic></Tab>
          <Tab $w={36}><Ic s={30}><path d="M0 13 10.500 2H4.500V-3H-4.500V2H-10.500Z" fill={C.sand} stroke="none" /><path d="M-4.500-5H4.500M-4.500-8.500H4.500M-4.500-12H4.500" strokeWidth="2.200" /></Ic></Tab>
          <Tab $w={115}>
            <svg width="23" height="28" viewBox="0 0 23 28" fill={C.sand}><path d="M11.500 1Q18 1 17.500 8 17 13 14.500 15V18Q22 20 22.500 24 22 27 11.500 27 1 27 .5 24 1 20 8.500 18V15Q6 13 5.500 8 5 1 11.500 1Z" /></svg>
            $Maintena...
          </Tab>
          <Tab $w={36}><Ic s={30}><path d="M-13 0H13" strokeWidth="4" /></Ic></Tab>
          <Tab $w={38} $danger><Ic s={32} sw={3.6}><path d="M-6-9.500A11.300 11.300 0 1 0 6-9.500" /><path d="M0-13V0" strokeWidth="4.400" /></Ic></Tab>
        </Session>
      </TitleBar>

      <Body>
        <Rail>{railIcons.map((icon, i) => <RailItem key={i} $active={i === 5}>{icon}</RailItem>)}</Rail>
        <Main>
          <Ribbon>
            <Menu>
              {["Fichier", "Exécution", "Construction", "Mesures", "Outils CAD", "Zones Scan"].map((m, i) => (
                <MenuItem key={m} $active={i === 2} $gap={i === 0 ? 2 : 1}>{m}</MenuItem>
              ))}
            </Menu>
            <Tools>
              <Group $w={470}>{createTools.map((t, i) => <Tool key={i}>{t}</Tool>)}</Group>
              <Group $w={376} $gap={6} $off>{buildTools.map((t, i) => <Tool key={i} $off>{t}</Tool>)}</Group>
              <Group $w={328} $gap={7} $off>{detectTools.map((t, i) => <Tool key={i} $off>{t}</Tool>)}</Group>
              <Group $w={48} $gap={5} $off $open><Tool $off>{detectTools[0]}</Tool></Group>
              {rightGroups.map((g, i) => (
                <Group key={i} $w={g.w} $gap={g.gap} $off={g.off}>{g.items.map((t, k) => <Tool key={k}>{t}</Tool>)}</Group>
              ))}
            </Tools>
          </Ribbon>

          <Work>
            <Side>
              <Heading $shift={5}>Séquence</Heading>
              <ListBox>
                <Rows>
                  {rows.map(([n, kind, name, tag]) => {
                    const on = kind === "line" || kind === "plane";
                    return (
                      <Row key={n} $on={on}>
                        <span>{n}</span>
                        <Badge $plain={kind === "cell"}>{badgeIcons[kind]}</Badge>
                        <Name $raised={name.startsWith("CALIB")}>{name}</Name>
                        <span>{tag}</span>
                      </Row>
                    );
                  })}
                </Rows>
                <Scroll><Thumb /></Scroll>
              </ListBox>
              <Heading $shift={1}>Fonctions selectionnées</Heading>
              <Result>
                <ResultText $w={111} $bold>Angle :</ResultText>
                <ResultText $w={90}>+64° 8' 23"</ResultText>
                <ResultText $w={53}>DMS</ResultText>
                <AngleButton>
                  <svg width="29" height="29" viewBox="0 0 29 29" fill="none">
                    <path d="M4 16 23 5" stroke="#fff" strokeWidth="1.600" /><path d="M3 24.500H26" stroke={C.sand} strokeWidth="1.600" />
                    <text x="10.500" y="21.500" fill={C.gold} fontSize="13" fontWeight="600" fontFamily="Open Sans">α</text>
                    <path d="M22.500 10Q25 15 22.500 20" stroke={C.gold} strokeWidth="1.600" /><path d="M19.500 12 22 8 25 12ZM20 18.500 26 19 22.500 23Z" fill={C.gold} />
                  </svg>
                </AngleButton>
              </Result>
            </Side>

            <Strip>
              <StripGroup $h={236}>{probesA.map((p, i) => <Probe key={i} $on={p.on} $off={p.off} $last={p.last}>{p.i}</Probe>)}</StripGroup>
              <StripGroup $h={95}>{probesB.map((p, i) => <Probe key={i} $on={p.on} $last={p.last}>{p.i}</Probe>)}</StripGroup>
            </Strip>

            <View>
              <Scene><SceneDrawing /></Scene>
              <Floating>{floats.map((f, i) => <Float key={i} $purple={f.p}>{f.i}</Float>)}</Floating>
            </View>

            <Camera>
              <Scan><ScanDrawing /></Scan>
              <Lights>
                <Stick>
                  <svg width="50" height="51" viewBox="-25 -25.500 50 51" fill="none" stroke={C.sand} strokeWidth="1.300">
                    <defs>
                      <linearGradient id="dish" x2="1" y2="1"><stop offset="0" stopColor="#2b3340" /><stop offset=".5" stopColor="#2f4a66" /><stop offset="1" stopColor="#2a7fb5" /></linearGradient>
                      <linearGradient id="cup" x2="1" y2="1"><stop offset="0" stopColor="#4d5668" /><stop offset="1" stopColor="#dfe4f2" /></linearGradient>
                    </defs>
                    <path d="M-7-20 0-24 7-20ZM-7 20 0 24 7 20ZM-20-8-24 0-20 8ZM20-8 24 0 20 8ZM-16-10V-16H-10ZM16-10V-16H10ZM-16 10V16H-10ZM16 10V16H10Z" />
                    <circle r="18" fill="url(#dish)" /><circle r="12" fill="url(#cup)" stroke="#cfc8bd" /><circle r="5.800" fill="#ffc800" stroke="#b98e12" />
                  </svg>
                </Stick>
                <LightGroup $w={240} $gap={280}>{[0, 1, 2, 3].map((n) => <Light key={n}><RingLight lit={n} /></Light>)}</LightGroup>
                <LightGroup $w={60} $gap={0}>
                  <Light>
                    <svg width="54" height="56" viewBox="-27 0 54 56" fill="#222528" stroke="#8a7f70" strokeWidth="1.600">
                      <path d="M-15 15V4Q-12 1 0 1 12 1 15 4V15Z" /><path d="M-16 40V17Q-14 13 0 13 14 13 16 17V40Z" />
                      <path d="M-16 18Q0 13 16 18V33Q0 37-16 33Z" fill="#16191a" /><path d="M-9 19V33M-6 19V34M-3 18V34M0 18V34M3 18V34M6 19V34M9 19V33" strokeWidth="1.300" />
                      <path d="M-16 35Q0 40 16 35V51Q0 57-16 51Z" /><ellipse cy="50" rx="15" ry="4.500" fill="#413629" />
                    </svg>
                  </Light>
                </LightGroup>
              </Lights>
            </Camera>
          </Work>
        </Main>
      </Body>

      <Status>
        <Cell $w={182} $pad={16}>PRÊT</Cell>
        <Sep />
        <Cell $w={881} />
        <Sep />
        <Cell $w={72} $pad={13}>Repère</Cell>
        <Select>Cellule<Drop><svg width="7" height="4" viewBox="0 0 7 4"><path d="M.5 0H6.500L3.500 4Z" /></svg></Drop></Select>
        <Cell $w={418} />
        <Cell $w={25} $color="#0c0e0f" $bold>&lt;</Cell>
        <Cell $w={28} $color="#c9c0b6" $bold>&gt;</Cell>
        <Sep />
        <Cell $w={64} $pad={25}>-°</Cell>
        <Sep />
        <Cell $w={60} $pad={13}>15:35</Cell>
      </Status>
    </App_>
  );
}
